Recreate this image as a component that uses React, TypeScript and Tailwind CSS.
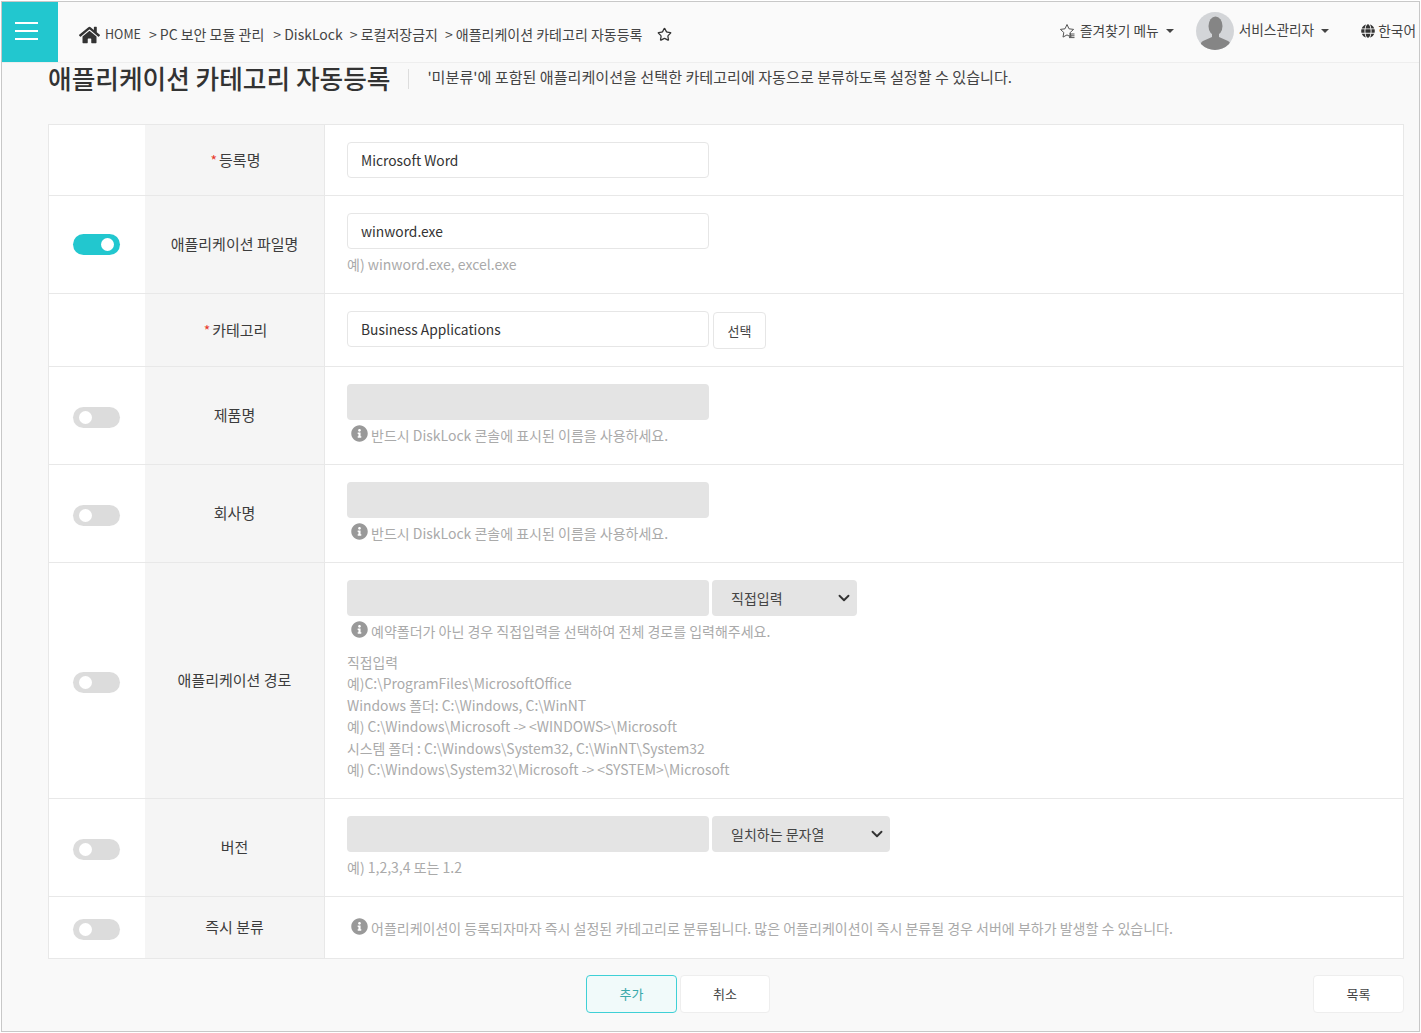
import React from 'react';
import { ChevronDown, Star } from 'lucide-react';
import { FaHome, FaInfoCircle, FaGlobe } from 'react-icons/fa';

const Toggle = ({ on }: { on?: boolean }) => (
  <div className={`w-[47px] h-[21px] rounded-full flex items-center px-[6px] ${on ? 'bg-[#22c7cf] justify-end' : 'bg-[#dcdcdc] justify-start'}`}>
    <div className="w-[13px] h-[13px] rounded-full bg-white" />
  </div>
);

const Field = ({ value, disabled }: { value?: string; disabled?: boolean }) => (
  <div className={`w-[362px] h-[36px] rounded-[4px] flex items-center px-[13px] text-[13.8px] text-[#333] ${disabled ? 'bg-[#e4e4e4]' : 'bg-white border border-[#e6e6e6]'}`}>
    {value}
  </div>
);

const Info = ({ children }: { children: React.ReactNode }) => (
  <div className="flex items-center ml-[4px] mt-[5px] h-[20px] text-[14px] text-[#aaaaaa]">
    <FaInfoCircle className="w-[17px] h-[17px] text-[#999] mr-[3px] -mt-[3px]" />
    <span>{children}</span>
  </div>
);

const Row = ({ h, label, req, toggle, on, children, last }: { h: string; label: string; req?: boolean; toggle?: boolean; on?: boolean; children: React.ReactNode; last?: boolean }) => (
  <div className={`flex ${h} ${last ? '' : 'border-b border-[#e8e8e8]'}`}>
    <div className={`w-[96px] shrink-0 flex items-center justify-center pr-px ${on ? '' : 'pt-[4px]'}`}>{toggle && <Toggle on={on} />}</div>
    <div className="w-[180px] shrink-0 bg-[#f5f5f5] border-r border-[#e8e8e8] flex items-center justify-center text-[15px] text-[#3c3c3c]">
      {req && <span className="text-[#e8392b] ml-[2px] mr-[2px] text-[14px]">*</span>}
      {label}
    </div>
    <div className={`flex-1 pl-[22px] min-w-0 ${last ? 'pt-[16px]' : 'pt-[17px]'}`}>{children}</div>
  </div>
);

const SelectBox = ({ w, label }: { w: string; label: string }) => (
  <div className={`${w} h-[36px] ml-[3px] rounded-[4px] bg-[#e4e4e4] flex items-center justify-between pl-[19px] pr-[4px] text-[14px] text-[#444]`}>
    <span>{label}</span>
    <ChevronDown size={18} strokeWidth={2.5} className="text-[#333]" />
  </div>
);

const Caret = () => <span className="ml-[7px] w-0 h-0 border-x-[4px] border-x-transparent border-t-[4px] border-t-[#444]" />;

// star outline with the small list lines at its lower right
const FavIcon = () => (
  <svg viewBox="0 0 16 16" className="w-[16px] h-[16px] mr-[5px] text-[#555]" fill="none" stroke="currentColor" strokeWidth="1">
    <path d="M8 1.5l2 4.3 4.6.6-3.4 3.1.8 4.6L8 11.9l-4 2.2.8-4.6L1.4 6.4 6 5.8z" strokeLinejoin="round" />
    <path d="M10 11h5.5M10 12.8h5.5M10 14.6h5.5" />
  </svg>
);

const Avatar = () => (
  <svg viewBox="0 0 38 38" className="w-[38px] h-[38px]">
    <clipPath id="avatar-clip"><circle cx="19" cy="19" r="19" /></clipPath>
    <g clipPath="url(#avatar-clip)">
      <rect width="38" height="38" fill="#d3d5d8" />
      <ellipse cx="19.5" cy="14" rx="7" ry="9.5" fill="#858585" />
      <path d="M16 20h7v5l9 4c2 1 3 3 3 9H4c0-6 1-8 3-9l9-4z" fill="#858585" />
    </g>
  </svg>
);

export default function App() {
  return (
    <div className="w-[1421px] h-[1033px] bg-white pt-px pl-px overflow-hidden" style={{ fontFamily: '"Noto Sans CJK KR", "Noto Sans", sans-serif' }}>
      <div className="w-[1419px] h-[1031px] border border-[#c8c8c8] bg-[#f9f9f9] flex flex-col">
        <header className="h-[61px] shrink-0 bg-[#fafafa] border-b border-[#eeeeee] flex">
          <div className="w-[56px] h-[60px] bg-[#22c7cf] flex flex-col justify-center gap-[6px] pl-[13px] pr-[20px] pb-[2px]">
            <span className="h-[2px] bg-white" />
            <span className="h-[2px] bg-white" />
            <span className="h-[2px] bg-white" />
          </div>
          <div className="flex items-center pl-[21px] pt-[5px] text-[14px] text-[#444] whitespace-nowrap">
            <FaHome className="w-[21px] h-[20px] text-[#333] mr-[5px]" />
            <span className="text-[12.5px]">HOME</span>
            <span className="ml-[8px]">&gt; PC 보안 모듈 관리</span>
            <span className="ml-[9px]">&gt; DiskLock</span>
            <span className="ml-[7px]">&gt; 로컬저장금지</span>
            <span className="ml-[7px]">&gt; 애플리케이션 카테고리 자동등록</span>
            <Star size={15} className="ml-[15px] text-[#333]" />
          </div>
          <div className="ml-auto flex items-center pb-[2px] text-[13.7px] text-[#444] whitespace-nowrap">
            <FavIcon />
            <span className="-mt-[2px]">즐겨찾기 메뉴</span>
            <Caret />
            <div className="ml-[22px]">
              <Avatar />
            </div>
            <span className="ml-[5px] -mt-[4px]">서비스관리자</span>
            <Caret />
            <FaGlobe className="ml-[32px] w-[14px] h-[14px] text-[#333] mr-[3px]" />
            <span className="mr-[3px] -mt-[2px]">한국어</span>
          </div>
        </header>

        <div className="pl-[46px] flex-1">
          <div className="flex items-center h-[31px] whitespace-nowrap">
            <h1 className="text-[25.7px] font-medium text-[#333] -mt-[1px]">애플리케이션 카테고리 자동등록</h1>
            <span className="w-px h-[20px] bg-[#dddddd] mx-[18px]" />
            <p className="text-[15.1px] text-[#444] -mt-[4px]">'미분류'에 포함된 애플리케이션을 선택한 카테고리에 자동으로 분류하도록 설정할 수 있습니다.</p>
          </div>

          <div className="mt-[30px] w-[1356px] bg-white border border-[#e8e8e8]">
            <Row h="h-[71px]" label="등록명" req>
              <Field value="Microsoft Word" />
            </Row>
            <Row h="h-[98px]" label="애플리케이션 파일명" toggle on>
              <Field value="winword.exe" />
              <p className="mt-[5px] text-[14px] text-[#aaaaaa]">예) winword.exe, excel.exe</p>
            </Row>
            <Row h="h-[73px]" label="카테고리" req>
              <div className="flex">
                <Field value="Business Applications" />
                <button className="ml-[4px] mt-[1px] w-[53px] h-[37px] bg-white border border-[#e6e6e6] rounded-[4px] text-[13px] text-[#444]">선택</button>
              </div>
            </Row>
            <Row h="h-[98px]" label="제품명" toggle>
              <Field disabled />
              <Info>반드시 DiskLock 콘솔에 표시된 이름을 사용하세요.</Info>
            </Row>
            <Row h="h-[98px]" label="회사명" toggle>
              <Field disabled />
              <Info>반드시 DiskLock 콘솔에 표시된 이름을 사용하세요.</Info>
            </Row>
            <Row h="h-[236px]" label="애플리케이션 경로" toggle>
              <div className="flex">
                <Field disabled />
                <SelectBox w="w-[145px]" label="직접입력" />
              </div>
              <Info>예약폴더가 아닌 경우 직접입력을 선택하여 전체 경로를 입력해주세요.</Info>
              <div className="mt-[11px] text-[13.9px] leading-[21.4px] text-[#aaaaaa]">
                <p>직접입력</p>
                <p>예)C:\ProgramFiles\MicrosoftOffice</p>
                <p>Windows 폴더: C:\Windows, C:\WinNT</p>
                <p>예) C:\Windows\Microsoft -&gt; &lt;WINDOWS&gt;\Microsoft</p>
                <p>시스템 폴더 : C:\Windows\System32, C:\WinNT\System32</p>
                <p>예) C:\Windows\System32\Microsoft -&gt; &lt;SYSTEM&gt;\Microsoft</p>
              </div>
            </Row>
            <Row h="h-[98px]" label="버전" toggle>
              <div className="flex">
                <Field disabled />
                <SelectBox w="w-[178px]" label="일치하는 문자열" />
              </div>
              <p className="mt-[5px] text-[14px] text-[#aaaaaa]">예) 1,2,3,4 또는 1.2</p>
            </Row>
            <Row h="h-[61px]" label="즉시 분류" toggle last>
              <Info>어플리케이션이 등록되자마자 즉시 설정된 카테고리로 분류됩니다. 많은 어플리케이션이 즉시 분류될 경우 서버에 부하가 발생할 수 있습니다.</Info>
            </Row>
          </div>

          <div className="relative mt-[16px] flex justify-center gap-[3px] w-[1356px] pr-[96px] text-[13px]">
            <button className="w-[91px] h-[38px] rounded-[4px] border border-[#3fd0d6] bg-[#f1fafa] text-[#3aa9ab]">추가</button>
            <button className="w-[90px] h-[38px] rounded-[4px] border border-[#eeeeee] bg-white text-[#444]">취소</button>
            <button className="absolute right-0 top-0 w-[91px] h-[38px] rounded-[4px] border border-[#eeeeee] bg-white text-[#444]">목록</button>
          </div>
        </div>
      </div>
    </div>
  );
}
